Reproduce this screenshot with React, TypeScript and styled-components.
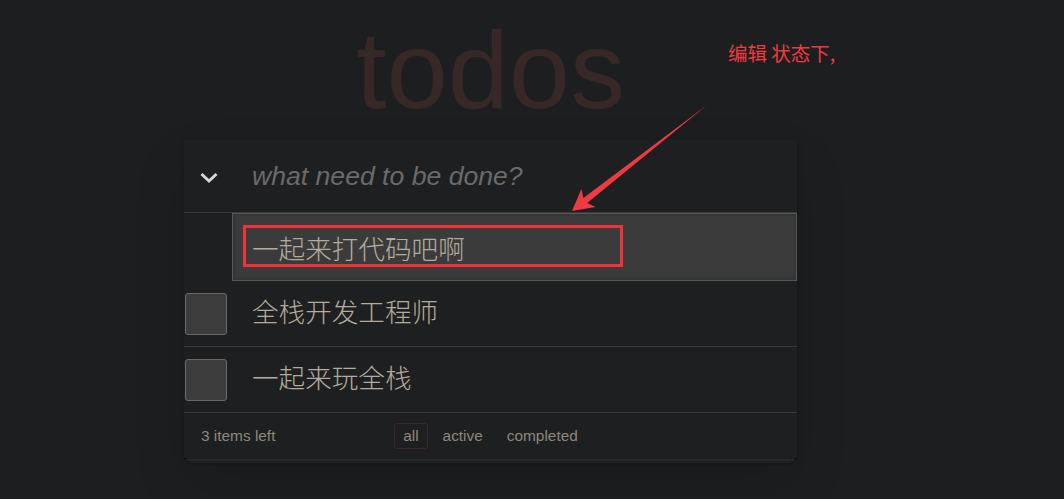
import React from "react";
import styled, { createGlobalStyle } from "styled-components";

const Global = createGlobalStyle`
  html, body { margin: 0; padding: 0; background: #1d1e20; }
  body {
    font-family: "Liberation Sans", Helvetica, Arial, "Noto Sans CJK SC", sans-serif;
    color: #b3ab9d;
  }
`;

const Page = styled.div`
  position: relative;
  width: 1064px;
  height: 499px;
  overflow: hidden;
  background: #1d1e20;
`;

const App_ = styled.section`
  width: 613px;
  margin-left: 184px;
  display: flex;
  flex-direction: column;
`;

const Title = styled.h1`
  margin: 15px 0 15px;
  font-size: 110px;
  line-height: 110px;
  font-weight: 400;
  text-align: center;
  color: #372828;
  letter-spacing: 0;
`;

const Panel = styled.div`
  background: #1e1f21;
  box-shadow: 0 2px 4px rgba(0, 0, 0, 0.25), 0 25px 50px rgba(0, 0, 0, 0.12);
`;

const HeaderRow = styled.div`
  height: 72px;
  display: flex;
  align-items: center;
`;

const Toggle = styled.div`
  width: 50px;
  display: flex;
  justify-content: center;
  align-items: center;
  padding-top: 4px;
`;

const NewTodo = styled.input`
  flex: 1;
  margin-left: 18px;
  border: none;
  outline: none;
  background: transparent;
  font-family: inherit;
  font-size: 26.6px;
  color: #b3ab9d;
  padding: 0;
  &::placeholder {
    font-style: italic;
    color: #6a6a6a;
  }
`;

const List = styled.ul`
  list-style: none;
  margin: 0;
  padding: 0;
  border-top: 1px solid #3a3b3d;
`;

const EditRow = styled.li`
  display: flex;
`;

const EditWrap = styled.div`
  position: relative;
  margin-left: 48px;
  width: 565px;
`;

const EditInput = styled.div`
  box-sizing: border-box;
  height: 68px;
  background: #3b3b3b;
  border: 1px solid #565757;
  box-shadow: inset 0 -1px 5px 0 rgba(0, 0, 0, 0.2);
  padding-left: 19px;
  display: flex;
  align-items: center;
  font-size: 26.6px;
  font-weight: 300;
  color: #b3ab9d;
`;

const Highlight = styled.div`
  position: absolute;
  left: 11px;
  top: 12px;
  width: 380px;
  height: 42px;
  box-sizing: border-box;
  border: 3px solid #ec343a;
  pointer-events: none;
`;

const Item = styled.li`
  height: 65px;
  display: flex;
  align-items: center;
  border-bottom: 1px solid #3a3b3d;
`;

const Check = styled.span`
  box-sizing: border-box;
  width: 42px;
  height: 42px;
  margin-left: 1px;
  background: #3c3c3c;
  border: 1px solid #6a6a6a;
  border-radius: 3px;
  flex-shrink: 0;
`;

const Label = styled.label`
  margin-left: 25px;
  font-size: 26.6px;
  font-weight: 300;
  line-height: 1.3;
  color: #b3ab9d;
`;

const Footer = styled.footer`
  position: relative;
  height: 45px;
  padding: 0 17px;
  display: grid;
  grid-template-columns: 1fr auto 1fr;
  align-items: center;
  font-size: 15.4px;
  color: #8d877c;
  &::before {
    content: "";
    position: absolute;
    left: 0;
    right: 0;
    bottom: 0;
    height: 45px;
    pointer-events: none;
    box-shadow: 0 1px 1px rgba(0, 0, 0, 0.2), 0 6px 0 -3px #262729,
      0 7px 1px -3px rgba(0, 0, 0, 0.2), 0 11px 0 -6px #232426,
      0 12px 2px -6px rgba(0, 0, 0, 0.2);
  }
`;

const Count = styled.span`
  margin-top: 1px;
`;

const Filters = styled.ul`
  list-style: none;
  margin: 0;
  padding: 0;
  display: flex;
`;

const Filter = styled.li<{ $selected?: boolean }>`
  margin: 0 3px;
  padding: 3px 8px;
  border: 1px solid ${(p) => (p.$selected ? "#3f2727" : "transparent")};
  border-radius: 3px;
  color: #8d877c;
`;

const Note = styled.div`
  position: absolute;
  left: 728px;
  top: 41px;
  font-family: "Noto Sans CJK SC", sans-serif;
  font-size: 19.5px;
  line-height: 24px;
  color: #ee3a40;
  white-space: pre;
`;

const ArrowSvg = styled.svg`
  position: absolute;
  left: 0;
  top: 0;
  pointer-events: none;
`;

export default function App() {
  return (
    <Page>
      <Global />
      <App_>
        <Title>todos</Title>
        <Panel>
          <HeaderRow>
            <Toggle>
              <svg width="20" height="12" viewBox="0 0 20 12">
                <path
                  d="M2.5 2 L10 9 L17.5 2"
                  fill="none"
                  stroke="#d6d6d6"
                  strokeWidth="3"
                />
              </svg>
            </Toggle>
            <NewTodo placeholder="what need to be done?" readOnly />
          </HeaderRow>
          <List>
            <EditRow>
              <EditWrap>
                <EditInput>一起来打代码吧啊</EditInput>
                <Highlight />
              </EditWrap>
            </EditRow>
            <Item>
              <Check />
              <Label>全栈开发工程师</Label>
            </Item>
            <Item>
              <Check />
              <Label>一起来玩全栈</Label>
            </Item>
          </List>
          <Footer>
            <Count>3 items left</Count>
            <Filters>
              <Filter $selected>all</Filter>
              <Filter>active</Filter>
              <Filter>completed</Filter>
            </Filters>
            <span />
          </Footer>
        </Panel>
      </App_>
      <Note>编辑 状态下,</Note>
      <ArrowSvg width="1064" height="499" viewBox="0 0 1064 499">
        <polygon
          points="572,211 595.6,207 587.2,202.9 707,105 583.4,198.1 581.4,189"
          fill="#ee3a40"
        />
      </ArrowSvg>
    </Page>
  );
}
